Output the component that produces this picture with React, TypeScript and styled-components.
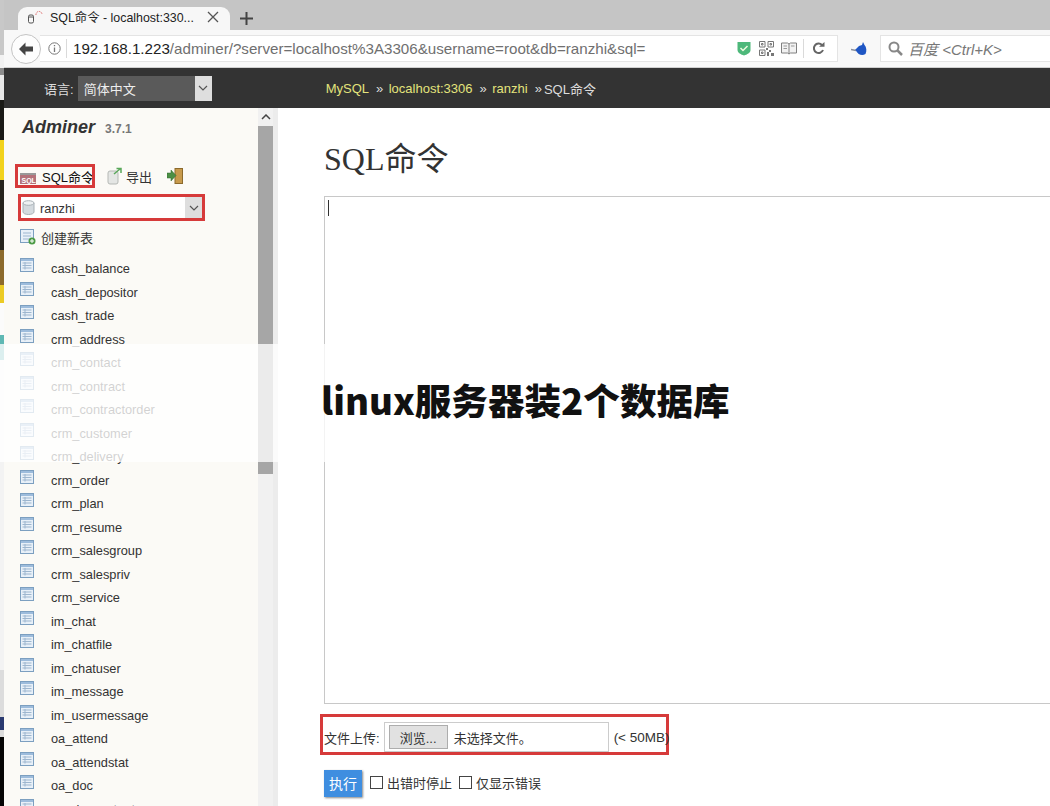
import styled, { createGlobalStyle } from 'styled-components';

const sansStack = `"Liberation Sans", "Noto Sans CJK SC", sans-serif`;

const GlobalStyle = createGlobalStyle`
  html, body {
    margin: 0;
    padding: 0;
    background: #fff;
    overflow: hidden;
  }
  * {
    box-sizing: border-box;
  }
`;

const Page = styled.div`
  position: relative;
  width: 1050px;
  height: 806px;
  display: flex;
  overflow: hidden;
  font-family: ${sansStack};
`;

// bit of the desktop peeking out left of the browser window
const DesktopEdge = styled.div`
  flex: 0 0 4px;
  background: linear-gradient(
    180deg,
    #c8c8c8 0 55px,
    #f2f2f2 55px 68px,
    #8c8c8c 68px 75px,
    #e8e8e8 75px 100px,
    #1a1a16 100px 140px,
    #f2d21c 140px 180px,
    #26241c 180px 250px,
    #8c6a2c 250px 285px,
    #eccb24 285px 303px,
    #fbfbfb 303px 335px,
    #5fb8b4 335px 360px,
    #f3f3f3 360px 670px,
    #dcdcdc 670px 717px,
    #2a3a70 717px 730px,
    #dcdcdc 730px 737px,
    #050505 737px
  );
`;

const BrowserWindow = styled.div`
  flex: 1;
  min-width: 0;
  display: flex;
  flex-direction: column;
`;

const TabStrip = styled.div`
  flex: 0 0 30px;
  display: flex;
  align-items: flex-end;
  padding-left: 14px;
  background: #c5c5c5;
`;

const Tab = styled.div`
  width: 212px;
  height: 23px;
  display: flex;
  align-items: center;
  padding: 0 11px 4px 9px;
  background: #f7f7f7;
  border-radius: 9px 9px 0 0;
  font-size: 12.4px;
  color: #222;
`;

const TabTitle = styled.span`
  flex: 1;
  margin-left: 6px;
  white-space: nowrap;
`;

const NewTab = styled.div`
  margin: 0 0 5px 10px;
  display: flex;
`;

const NavBar = styled.div`
  flex: 0 0 38px;
  position: relative;
  display: flex;
  align-items: center;
  padding: 0 0 0 36px;
  background: #f8f8f8;
  border-bottom: 1px solid #cfcfcf;
`;

const BackButton = styled.div`
  position: absolute;
  left: 7px;
  top: 4px;
  width: 30px;
  height: 30px;
  display: flex;
  align-items: center;
  justify-content: center;
  border-radius: 50%;
  border: 1px solid #c4c4c4;
  background: #fdfdfd;
`;

const UrlBox = styled.div`
  width: 798px;
  height: 27px;
  display: flex;
  align-items: center;
  padding-left: 8px;
  background: #fff;
  border: 1px solid #e4e4e4;
  border-left: none;
`;

const Divider = styled.span`
  width: 1px;
  height: 19px;
  background: #dadada;
`;

const UrlText = styled.div`
  flex: 1;
  margin-left: 6px;
  font-size: 15.15px;
  color: #6f6f6f;
  white-space: nowrap;
`;

const UrlHost = styled.span`
  color: #222;
`;

const UrlTools = styled.div`
  display: flex;
  align-items: center;
  gap: 6px;
  padding-right: 12px;
`;

const MouseSlot = styled.div`
  width: 42px;
  display: flex;
  justify-content: center;
`;

const SearchBox = styled.div`
  flex: 1;
  height: 27px;
  display: flex;
  align-items: center;
  padding-left: 7px;
  gap: 5px;
  background: #fff;
  border: 1px solid #e4e4e4;
  border-right: none;
  font-size: 15px;
  font-style: italic;
  color: #777;
  white-space: nowrap;
`;

const TopBar = styled.div`
  flex: 0 0 40px;
  display: flex;
  align-items: center;
  padding-left: 40px;
  background: #333;
  font-size: 13px;
  color: #ddd;
`;

const LangSelect = styled.div`
  width: 134px;
  height: 25px;
  margin-left: 4px;
  display: flex;
  align-items: center;
  padding-left: 6px;
  background: #5a5a5a;
  color: #eee;
`;

const SelectLabel = styled.span`
  flex: 1;
`;

const SelectArrow = styled.span<{ $width: number }>`
  align-self: stretch;
  width: ${(p) => p.$width}px;
  display: flex;
  align-items: center;
  justify-content: center;
  background: #dedede;
`;

const Breadcrumb = styled.div`
  margin-left: 114px;
  display: flex;
  align-items: center;
  white-space: nowrap;
`;

const CrumbLink = styled.span`
  color: #e4e47c;
`;

const CrumbSep = styled.span<{ $after?: number }>`
  margin: 0 ${(p) => p.$after ?? 5.5}px 0 7px;
  color: #ddd;
`;

const Body = styled.div`
  flex: 1;
  min-height: 0;
  display: flex;
`;

const Sidebar = styled.aside`
  flex: 0 0 254px;
  overflow: hidden;
  padding: 9px 0 0 11px;
  background: #fbfaf6;
  color: #333;
  font-size: 12.8px;
`;

const Brand = styled.div`
  height: 22px;
  display: flex;
  align-items: baseline;
  padding-left: 7px;
  gap: 10px;
`;

const BrandName = styled.span`
  font-size: 18px;
  font-weight: bold;
  font-style: italic;
  color: #333;
`;

const BrandVersion = styled.span`
  font-size: 12px;
  font-weight: bold;
  color: #777;
`;

const CommandRow = styled.div`
  margin-top: 25px;
  display: flex;
  align-items: center;
`;

const Highlight = styled.div`
  border: 3px solid #d63a3a;
`;

const SqlLink = styled(Highlight)`
  width: 80px;
  height: 24px;
  display: flex;
  align-items: center;
  padding-left: 2px;
  gap: 6px;
  font-size: 13px;
  color: #111;
  white-space: nowrap;
  overflow: hidden;
`;

const ExportLink = styled.div`
  margin-left: 12px;
  display: flex;
  align-items: center;
  gap: 3px;
  font-size: 13px;
`;

const ImportLink = styled.div`
  margin-left: 15px;
  display: flex;
`;

const DbSelect = styled(Highlight)`
  width: 187px;
  height: 27px;
  margin: 6px 0 0 3px;
  display: flex;
  align-items: center;
  padding-left: 1px;
  gap: 5px;
  background: #fff;
  font-size: 12.8px;
`;

const DbName = styled(SelectLabel)`
  padding-top: 1px;
`;

const CreateLink = styled.div`
  margin: 6px 0 0 5px;
  height: 20px;
  display: flex;
  align-items: center;
  gap: 5px;
  font-size: 13px;
`;

const TableList = styled.ul`
  list-style: none;
  margin: 9px 0 0;
  padding: 0 0 0 5px;
`;

const TableRow = styled.li`
  height: 23.5px;
  display: flex;
  align-items: center;
`;

const TableName = styled.span`
  margin: 2px 0 0 17px;
`;

const Scrollbar = styled.div`
  flex: 0 0 15px;
  display: flex;
  flex-direction: column;
  background: #f1f1f1;
`;

const ScrollArrow = styled.div`
  flex: 0 0 18px;
  display: flex;
  align-items: center;
  justify-content: center;
  background: #f1f1f1;
`;

const ScrollThumb = styled.div`
  flex: 0 0 348px;
  background: #a6a6a6;
`;

const ScrollGutter = styled.div`
  flex: 0 0 5px;
  background: #ececec;
`;

const Content = styled.main`
  flex: 1;
  min-width: 0;
  overflow: hidden;
  padding: 30px 0 0 46px;
  background: #fff;
  color: #333;
`;

const Title = styled.h2`
  margin: 0;
  height: 36px;
  display: flex;
  align-items: center;
  font-family: "Liberation Serif", "Noto Sans CJK SC", serif;
  font-size: 32px;
  font-weight: normal;
  white-space: nowrap;
`;

const Editor = styled.div`
  width: 800px;
  height: 508px;
  margin-top: 22px;
  padding: 3px 0 0 3px;
  border: 1px solid #c8c8c8;
`;

const Caret = styled.span`
  display: block;
  width: 1px;
  height: 16px;
  background: #333;
`;

const UploadRow = styled(Highlight)`
  width: 349px;
  height: 41px;
  margin: 10px 0 0 -4px;
  display: flex;
  align-items: center;
  padding: 5px 0 0 1px;
  font-size: 13px;
  white-space: nowrap;
`;

const FileInput = styled.div`
  flex: 0 0 225px;
  height: 30px;
  margin: 0 5px 0 4px;
  display: flex;
  align-items: center;
  padding-left: 4px;
  gap: 6px;
  border: 1px solid #ccc;
`;

const BrowseButton = styled.span`
  width: 59px;
  height: 24px;
  display: flex;
  align-items: center;
  justify-content: center;
  background: #e1e1e1;
  border: 1px solid #adadad;
`;

const SizeNote = styled.span`
  font-size: 13.5px;
`;

const ActionRow = styled.div`
  margin-top: 15px;
  display: flex;
  align-items: center;
  font-size: 13px;
`;

const RunButton = styled.span`
  width: 38px;
  height: 27px;
  margin-right: 8px;
  padding-bottom: 2px;
  display: flex;
  align-items: center;
  justify-content: center;
  background: #3f8ee0;
  color: #fff;
  font-size: 14px;
  box-shadow: 1px 1px 2px #888;
`;

const CheckOption = styled.label`
  margin-right: 7px;
  padding-bottom: 2px;
  display: flex;
  align-items: center;
  gap: 4px;
`;

const CheckBox = styled.span`
  width: 13px;
  height: 13px;
  border: 1px solid #444;
  background: #fff;
`;

const WatermarkBand = styled.div`
  position: absolute;
  left: 0;
  right: 0;
  top: 344px;
  height: 118px;
  display: flex;
  align-items: center;
  padding: 0 0 8px 321px;
  background: rgba(255, 255, 255, 0.78);
`;

const WatermarkText = styled.div`
  font-family: "Noto Sans CJK SC", sans-serif;
  font-size: 36.6px;
  font-weight: 900;
  color: #111;
  white-space: nowrap;
`;

const tables = [
  'cash_balance', 'cash_depositor', 'cash_trade', 'crm_address', 'crm_contact', 'crm_contract',
  'crm_contractorder', 'crm_customer', 'crm_delivery', 'crm_order', 'crm_plan', 'crm_resume',
  'crm_salesgroup', 'crm_salespriv', 'crm_service', 'im_chat', 'im_chatfile', 'im_chatuser',
  'im_message', 'im_usermessage', 'oa_attend', 'oa_attendstat', 'oa_doc', 'oa_doccontent',
];

const TableIcon = () => (
  <svg width="14" height="14" viewBox="0 0 14 14" style={{ flex: 'none', marginBottom: 5 }}>
    <rect x="0.5" y="0.5" width="13" height="13" fill="#e8f0f8" stroke="#7c9fc0" />
    <rect x="1" y="1" width="12" height="2" fill="#9dbcdc" />
    <path d="M2.500 5h9M2.500 7.500h9M2.500 10h9M5 4v7.500" stroke="#9db6cf" strokeWidth="1" fill="none" />
  </svg>
);

const Chevron = ({ color = '#555' }: { color?: string }) => (
  <svg width="10" height="6" viewBox="0 0 10 6">
    <path d="M1 1l4 4 4-4" stroke={color} strokeWidth="1.2" fill="none" />
  </svg>
);

const DbIcon = () => (
  <svg width="13" height="15" viewBox="0 0 13 15">
    <path d="M1 3v9c0 1.400 2.400 2.500 5.500 2.500S12 13.400 12 12V3z" fill="#d4dadf" stroke="#a8b0b6" />
    <ellipse cx="6.500" cy="3" rx="5.500" ry="2.300" fill="#eef1f3" stroke="#a8b0b6" />
  </svg>
);

export default function App() {
  return (
    <Page>
      <GlobalStyle />
      <DesktopEdge />
      <BrowserWindow>
        <TabStrip>
          <Tab>
            <svg width="17" height="14" viewBox="0 0 17 14">
              <rect x="1.500" y="5" width="5" height="8" rx="1.500" fill="none" stroke="#555" />
              <path d="M1.500 7h5" stroke="#555" />
              <path d="M9 5a3 3 0 0 1 6-1" stroke="#d66" fill="none" strokeDasharray="1.500 1" />
            </svg>
            <TabTitle>SQL命令 - localhost:330...</TabTitle>
            <svg width="12" height="12" viewBox="0 0 12 12">
              <path d="M1 1l10 10M11 1L1 11" stroke="#555" strokeWidth="1.300" />
            </svg>
          </Tab>
          <NewTab>
            <svg width="13" height="13" viewBox="0 0 13 13">
              <path d="M6.500 0v13M0 6.500h13" stroke="#444" strokeWidth="2" />
            </svg>
          </NewTab>
        </TabStrip>
        <NavBar>
          <BackButton>
            <svg width="16" height="14" viewBox="0 0 16 14">
              <path d="M7.500 0.500L1 7l6.500 6.500V9.500H15v-5H7.500z" fill="#444" />
            </svg>
          </BackButton>
          <UrlBox>
            <svg width="13" height="13" viewBox="0 0 13 13" style={{ marginRight: 5 }}>
              <circle cx="6.500" cy="6.500" r="5.700" fill="none" stroke="#777" />
              <path d="M6.500 5.500v4.500M6.500 3v1.300" stroke="#777" strokeWidth="1.300" />
            </svg>
            <Divider />
            <UrlText>
              <UrlHost>192.168.1.223</UrlHost>/adminer/?server=localhost%3A3306&amp;username=root&amp;db=ranzhi&amp;sql=
            </UrlText>
            <UrlTools>
              <svg width="14" height="15" viewBox="0 0 14 15">
                <path d="M0.500 1h13v8c0 3-3.500 4.500-6.500 5.500C4 13.500 0.500 12 0.500 9z" fill="#4db87a" />
                <path d="M3.500 7l2.500 2.500 4.500-4.500" stroke="#eefbe0" strokeWidth="1.500" fill="none" />
              </svg>
              <svg width="15" height="15" viewBox="0 0 15 15" style={{ marginLeft: 2 }}>
                <path
                  d="M0.500 0.500h5.500v5.500H0.500zM9 0.500h5.500v5.500H9zM0.500 9h5.500v5.500H0.500zM2.500 2.500h1.500v1.500H2.500zM11 2.500h1.500v1.500H11zM2.500 11h1.500v1.500H2.500z"
                  fill="none"
                  stroke="#777"
                />
                <path d="M7 7h2v2H7zM10 9h2v2h-2zM12 12h3v3h-3zM8 11h2v4H8z" fill="#777" />
              </svg>
              <svg width="16" height="13" viewBox="0 0 16 13" style={{ marginLeft: 1 }}>
                <path d="M0.500 1h6l1.500 1 1.500-1h6v10h-6L8 12l-1.500-1h-6zM8 2v10" fill="#f2f2f2" stroke="#808080" />
                <path d="M2.500 4h3.500M2.500 6.500h3.500M10 4h3.500" stroke="#999" />
              </svg>
              <Divider />
              <svg width="13" height="13" viewBox="0 0 13 13" style={{ marginLeft: 2 }}>
                <path d="M11 8a4.700 4.700 0 1 1-1-5" fill="none" stroke="#666" strokeWidth="2" />
                <path d="M7 4.700h5.500V0z" fill="#666" />
              </svg>
            </UrlTools>
          </UrlBox>
          <MouseSlot>
            <svg width="17" height="14" viewBox="0 0 17 14">
              <path d="M0 7.500l5 1" stroke="#8a8f9c" strokeWidth="1.500" />
              <path d="M4 8l4-4 3-1 1-3 1.500 3c2 2 2.500 6 1 9-3 2-7 1.500-10-4z" fill="#1f56c4" />
            </svg>
          </MouseSlot>
          <SearchBox>
            <svg width="15" height="15" viewBox="0 0 15 15">
              <circle cx="6" cy="6" r="4.500" fill="none" stroke="#888" strokeWidth="2" />
              <path d="M9.500 9.500L14 14" stroke="#888" strokeWidth="2.500" />
            </svg>
            百度 &lt;Ctrl+K&gt;
          </SearchBox>
        </NavBar>
        <TopBar>
          语言:
          <LangSelect>
            <SelectLabel>简体中文</SelectLabel>
            <SelectArrow $width={17}>
              <Chevron />
            </SelectArrow>
          </LangSelect>
          <Breadcrumb>
            <CrumbLink>MySQL</CrumbLink>
            <CrumbSep>»</CrumbSep>
            <CrumbLink>localhost:3306</CrumbLink>
            <CrumbSep>»</CrumbSep>
            <CrumbLink>ranzhi</CrumbLink>
            <CrumbSep $after={2}>»</CrumbSep>
            SQL命令
          </Breadcrumb>
        </TopBar>
        <Body>
          <Sidebar>
            <Brand>
              <BrandName>Adminer</BrandName>
              <BrandVersion>3.7.1</BrandVersion>
            </Brand>
            <CommandRow>
              <SqlLink>
                <svg width="16" height="11" viewBox="0 0 16 11" style={{ flex: 'none', marginTop: 4 }}>
                  <rect width="16" height="11" fill="#b4727a" />
                  <rect width="16" height="2" fill="#999" />
                  <text x="1.500" y="9.500" fontSize="7" fontWeight="bold" fill="#fff">SQL</text>
                </svg>
                SQL命令
              </SqlLink>
              <ExportLink>
                <svg width="16" height="18" viewBox="0 0 16 18">
                  <rect x="1" y="4" width="10" height="13" rx="2" fill="#e4e6e4" stroke="#b5b8b5" />
                  <path d="M7 7l6-5M9.500 1.500H14V6" stroke="#5aa85a" strokeWidth="1.500" fill="none" />
                </svg>
                导出
              </ExportLink>
              <ImportLink>
                <svg width="16" height="16" viewBox="0 0 16 16">
                  <rect x="8" y="0.500" width="7.500" height="15" fill="#c79a4c" stroke="#8c6a2c" />
                  <path d="M0 5h4V2l5 5.500L4 13v-3H0z" fill="#4c8f45" stroke="#2f6a2c" strokeWidth="0.500" />
                </svg>
              </ImportLink>
            </CommandRow>
            <DbSelect>
              <DbIcon />
              <DbName>ranzhi</DbName>
              <SelectArrow $width={17}>
                <Chevron />
              </SelectArrow>
            </DbSelect>
            <CreateLink>
              <svg width="16" height="16" viewBox="0 0 16 16">
                <rect x="0.500" y="0.500" width="13" height="13" fill="#e8f0f8" stroke="#7c9fc0" />
                <path d="M3 4h8M3 7h8M3 10h8" stroke="#9db6cf" />
                <circle cx="12" cy="12" r="3.500" fill="#4c9a45" />
                <path d="M10 12h4M12 10v4" stroke="#fff" />
              </svg>
              创建新表
            </CreateLink>
            <TableList>
              {tables.map((name) => (
                <TableRow key={name}>
                  <TableIcon />
                  <TableName>{name}</TableName>
                </TableRow>
              ))}
            </TableList>
          </Sidebar>
          <Scrollbar>
            <ScrollArrow>
              <svg width="10" height="6" viewBox="0 0 10 6">
                <path d="M1 5l4-4 4 4" stroke="#444" strokeWidth="1.500" fill="none" />
              </svg>
            </ScrollArrow>
            <ScrollThumb />
          </Scrollbar>
          <ScrollGutter />
          <Content>
            <Title>SQL命令</Title>
            <Editor>
              <Caret />
            </Editor>
            <UploadRow>
              文件上传:
              <FileInput>
                <BrowseButton>浏览...</BrowseButton>
                未选择文件。
              </FileInput>
              <SizeNote>(&lt; 50MB)</SizeNote>
            </UploadRow>
            <ActionRow>
              <RunButton>执行</RunButton>
              <CheckOption>
                <CheckBox />
                出错时停止
              </CheckOption>
              <CheckOption>
                <CheckBox />
                仅显示错误
              </CheckOption>
            </ActionRow>
          </Content>
        </Body>
      </BrowserWindow>
      <WatermarkBand>
        <WatermarkText>linux服务器装2个数据库</WatermarkText>
      </WatermarkBand>
    </Page>
  );
}
